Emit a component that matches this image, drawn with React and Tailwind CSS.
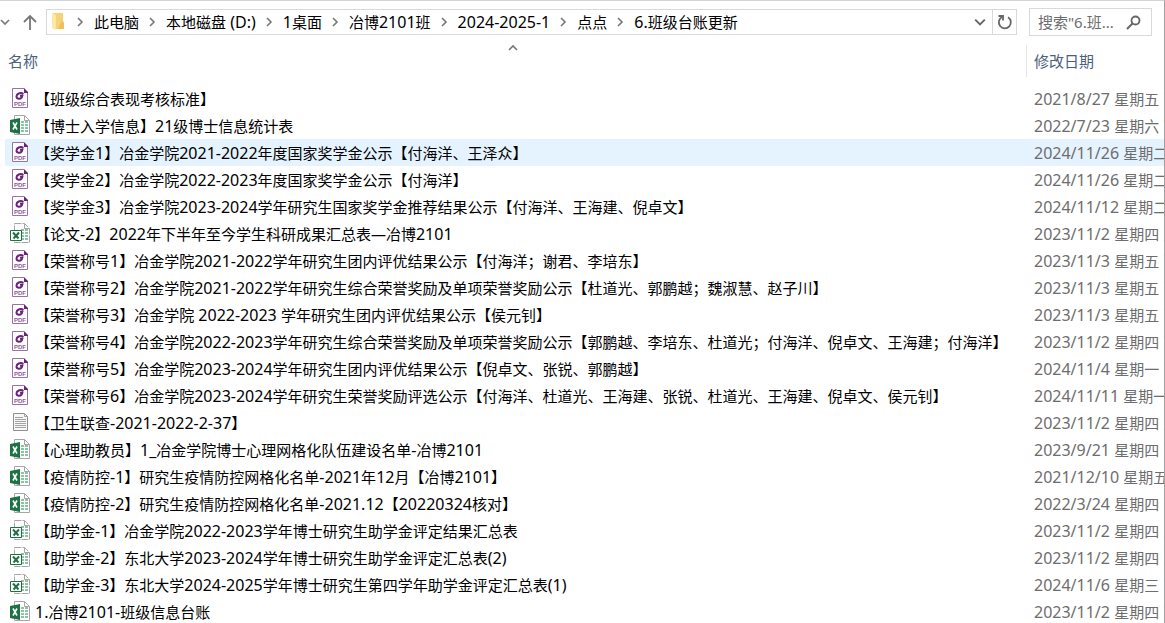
import React, { useState } from 'react';

const files = [
    { type: 'pdf', name: '【班级综合表现考核标准】', date: '2021/8/27 星期五 下午' },
    { type: 'xlsx', name: '【博士入学信息】21级博士信息统计表', date: '2022/7/23 星期六 下午' },
    { type: 'pdf', name: '【奖学金1】冶金学院2021-2022年度国家奖学金公示【付海洋、王泽众】', date: '2024/11/26 星期二' },
    { type: 'pdf', name: '【奖学金2】冶金学院2022-2023年度国家奖学金公示【付海洋】', date: '2024/11/26 星期二' },
    { type: 'pdf', name: '【奖学金3】冶金学院2023-2024学年研究生国家奖学金推荐结果公示【付海洋、王海建、倪卓文】', date: '2024/11/12 星期二' },
    { type: 'xls', name: '【论文-2】2022年下半年至今学生科研成果汇总表—冶博2101', date: '2023/11/2 星期四 上午' },
    { type: 'pdf', name: '【荣誉称号1】冶金学院2021-2022学年研究生团内评优结果公示【付海洋；谢君、李培东】', date: '2023/11/3 星期五 下午' },
    { type: 'pdf', name: '【荣誉称号2】冶金学院2021-2022学年研究生综合荣誉奖励及单项荣誉奖励公示【杜道光、郭鹏越；魏淑慧、赵子川】', date: '2023/11/3 星期五 下午' },
    { type: 'pdf', name: '【荣誉称号3】冶金学院 2022-2023 学年研究生团内评优结果公示【侯元钊】', date: '2023/11/3 星期五 下午' },
    { type: 'pdf', name: '【荣誉称号4】冶金学院2022-2023学年研究生综合荣誉奖励及单项荣誉奖励公示【郭鹏越、李培东、杜道光；付海洋、倪卓文、王海建；付海洋】', date: '2023/11/2 星期四 下午' },
    { type: 'pdf', name: '【荣誉称号5】冶金学院2023-2024学年研究生团内评优结果公示【倪卓文、张锐、郭鹏越】', date: '2024/11/4 星期一 下午' },
    { type: 'pdf', name: '【荣誉称号6】冶金学院2023-2024学年研究生荣誉奖励评选公示【付海洋、杜道光、王海建、张锐、杜道光、王海建、倪卓文、侯元钊】', date: '2024/11/11 星期一' },
    { type: 'txt', name: '【卫生联查-2021-2022-2-37】', date: '2023/11/2 星期四 上午' },
    { type: 'xlsx', name: '【心理助教员】1_冶金学院博士心理网格化队伍建设名单-冶博2101', date: '2023/9/21 星期四 下午' },
    { type: 'xlsx', name: '【疫情防控-1】研究生疫情防控网格化名单-2021年12月【冶博2101】', date: '2021/12/10 星期五' },
    { type: 'xlsx', name: '【疫情防控-2】研究生疫情防控网格化名单-2021.12【20220324核对】', date: '2022/3/24 星期四 下午' },
    { type: 'xls', name: '【助学金-1】冶金学院2022-2023学年博士研究生助学金评定结果汇总表', date: '2023/11/2 星期四 上午' },
    { type: 'xls', name: '【助学金-2】东北大学2023-2024学年博士研究生助学金评定汇总表(2)', date: '2023/11/2 星期四 上午' },
    { type: 'xls', name: '【助学金-3】东北大学2024-2025学年博士研究生第四学年助学金评定汇总表(1)', date: '2024/11/6 星期三 下午' },
    { type: 'xlsx', name: '1.冶博2101-班级信息台账', date: '2023/11/2 星期四 下午' },
];

const crumbs = ['此电脑', '本地磁盘 (D:)', '1桌面', '冶博2101班', '2024-2025-1', '点点', '6.班级台账更新'];

// Latin runs are set one step larger than the Chinese around them
const MixedText = ({ children }) =>
    children.split(/([\x20-\x7e]+)/).map((part, i) =>
        i % 2 ? <span key={i} className="text-[16px] leading-none">{part}</span> : part
    );

const PdfIcon = () => (
    <svg width="16" height="21" viewBox="0 0 16 21" fill="none" aria-hidden="true">
        <path d="M12 .5H.5v19h15V4" fill="#fff" stroke="#9b72a4" />
        <path d="M12 0l4 4v1h-4z" fill="#6b2379" />
        <path d="M11.500 5.800C8 4 4.500 5.800 4.500 8.600c0 2.700 3.700 2.900 5.300.7l.5-1.500H8" stroke="#6b2379" strokeWidth="2" />
        <text x="8" y="17.500" textAnchor="middle" fontSize="6" fontWeight="bold" fill="#8d5b98" fontFamily="Liberation Sans">PDF</text>
    </svg>
);

const ExcelIcon = ({ solid }) => (
    <svg width="20" height="21" viewBox="0 0 20 21" fill="none" aria-hidden="true">
        <path d="M4.500.5h10l5 5v14h-15z" fill="#fff" stroke="#a6a6a6" strokeDasharray={solid ? undefined : '7 1'} />
        <path d="M14.500.5v5h5" stroke="#a6a6a6" />
        <path d="M11 6h3v2h-3zM15 6h3v2h-3zM11 9h3v2h-3zM15 9h3v2h-3zM11 12h3v2h-3zM15 12h3v2h-3zM11 15h3v2h-3zM15 15h3v2h-3z" fill="#8cc3a2" />
        {solid ? (
            <>
                <path d="M0 5l10-2v16L0 17z" fill="#1e7145" />
                <path d="M3 7.500l4 7M7 7.500l-4 7" stroke="#fff" strokeWidth="1.600" />
            </>
        ) : (
            <>
                <path d="M.5 7.500h11v10H.5z" fill="#fff" stroke="#1e7145" />
                <path d="M3 9.500l5.500 6M9 9.500l-5.500 6" stroke="#1e7145" strokeWidth="2" />
            </>
        )}
    </svg>
);

const TextIcon = () => (
    <svg width="15" height="19" viewBox="0 0 15 19" fill="none" aria-hidden="true">
        <path d="M.5.5h11l3 3v14H.5z" fill="#f7f7f7" stroke="#8f8f8f" />
        <path d="M11.500.5v3h3M2 4.500h8M2 6.500h11M2 8.500h11M2 10.500h11M2 12.500h11M2 14.500h11" stroke="#a3a3a3" />
    </svg>
);

const FileIcon = ({ type }) => {
    if (type === 'pdf') return <PdfIcon />;
    if (type === 'txt') return <TextIcon />;
    return <ExcelIcon solid={type === 'xlsx'} />;
};

const FolderIcon = () => (
    <svg width="13" height="18" viewBox="0 0 13 18" className="shrink-0" aria-hidden="true">
        <path d="M1 0h10v9l1 1v6H1z" fill="#f6d27a" />
        <path d="M9 9l2-1 1 2v6H6z" fill="#eec257" />
        <path d="M0 0l4 2v14l-1 1-3-2z" fill="#ffe8a3" />
    </svg>
);

const Chevron = ({ d, className, size = 10 }) => (
    <svg width={size} height={size} viewBox="0 0 10 10" fill="none" className={className} aria-hidden="true">
        <path d={d} stroke="currentColor" strokeWidth="1.600" />
    </svg>
);

const Toolbar = () => (
    <header className="flex h-[42px] items-center pr-3">
        <button aria-label="最近的位置" className="flex w-[21px] shrink-0 text-[#777]">
            <Chevron d="M1 3l4 4 4-4" />
        </button>
        <button aria-label="上移" className="mr-[7px] flex w-[18px] shrink-0 justify-center text-[#777]">
            <svg width="16" height="16" viewBox="0 0 16 16" fill="none">
                <path d="M8 16V2M2 8l6-6 6 6" stroke="currentColor" strokeWidth="1.800" />
            </svg>
        </button>
        <div className="flex h-[26px] min-w-0 flex-1 items-center border border-[#d9d9d9]">
            <span className="ml-[5px] flex w-[15px] shrink-0"><FolderIcon /></span>
            <nav aria-label="路径" className="flex min-w-0 flex-1 items-center overflow-hidden">
                {crumbs.map((crumb) => (
                    <React.Fragment key={crumb}>
                        <Chevron d="M3 1l4 4-4 4" className="mr-[9px] ml-2 shrink-0 text-[#777]" />
                        <a href="#" className="shrink-0 leading-6 whitespace-pre"><MixedText>{crumb}</MixedText></a>
                    </React.Fragment>
                ))}
            </nav>
            <button aria-label="历史记录" className="flex w-6 shrink-0 justify-center text-[#666]">
                <Chevron d="M1 3l4 4 4-4" size={12} />
            </button>
            <button aria-label="刷新" className="flex h-full w-6 shrink-0 items-center justify-center border-l border-[#d9d9d9] text-[#666]">
                <svg width="16" height="16" viewBox="0 0 16 16" fill="none">
                    <path d="M11 3.200A6 6 0 1 1 5 3" stroke="currentColor" strokeWidth="1.800" />
                    <path d="M1.500 2h4.500v4.500" stroke="currentColor" strokeWidth="1.800" />
                </svg>
            </button>
        </div>
        <div className="ml-3 flex h-7 w-[123px] shrink-0 items-center border border-[#d9d9d9] pr-2.5 pl-2">
            <input aria-label="搜索" placeholder={'搜索"6.班...'} className="w-0 min-w-0 flex-1 outline-none placeholder:text-[#6d6d6d]" />
            <svg width="15" height="15" viewBox="0 0 15 15" fill="none" className="shrink-0 text-[#666]">
                <circle cx="9.500" cy="5.500" r="4" stroke="currentColor" strokeWidth="1.800" />
                <path d="M6.500 8.500L1 14" stroke="currentColor" strokeWidth="2" />
            </svg>
        </div>
    </header>
);

export default function App() {
    const [selected, setSelected] = useState(2);

    return (
        <div className="h-screen overflow-hidden border-t border-r border-t-[#d4d4d4] border-r-[#a0a0a0] bg-white font-['Noto_Sans','Noto_Sans_CJK_SC',sans-serif] text-[15px] text-black">
            <Toolbar />
            <main className="pl-[5px]">
                <table className="w-full table-fixed border-collapse">
                    <thead className="text-[#4c607a]">
                        <tr>
                            <th className="h-[42px] p-0 text-left align-top font-normal">
                                <button className="flex w-full flex-col items-start pr-2 pl-[3px]">
                                    <Chevron d="M1 7l4-4 4 4" className="self-center text-[#777]" />
                                    <span className="leading-4">名称</span>
                                </button>
                            </th>
                            <th className="w-[138px] p-0 pt-0.5 text-left align-top font-normal">
                                <button className="flex h-8 w-full items-center border-l border-[#e5e5e5] pl-[7px]">修改日期</button>
                            </th>
                        </tr>
                    </thead>
                    <tbody>
                        {files.map((file, i) => (
                            <tr key={file.name} onClick={() => setSelected(i)} className={i === selected ? 'bg-[#e5f3ff]' : ''}>
                                <td className="p-0">
                                    <div className="flex h-[27px] items-center overflow-hidden whitespace-pre">
                                        <span className="mr-px ml-[5px] flex w-5 shrink-0 justify-center"><FileIcon type={file.type} /></span>
                                        <span className="pt-0.5 pl-1"><MixedText>{file.name}</MixedText></span>
                                    </div>
                                </td>
                                <td className="p-0">
                                    <div className="flex h-[27px] items-center overflow-hidden pl-2 whitespace-pre text-[#6d6d6d]">
                                        <span className="shrink-0 pt-0.5"><MixedText>{file.date}</MixedText></span>
                                    </div>
                                </td>
                            </tr>
                        ))}
                    </tbody>
                </table>
            </main>
        </div>
    );
}
